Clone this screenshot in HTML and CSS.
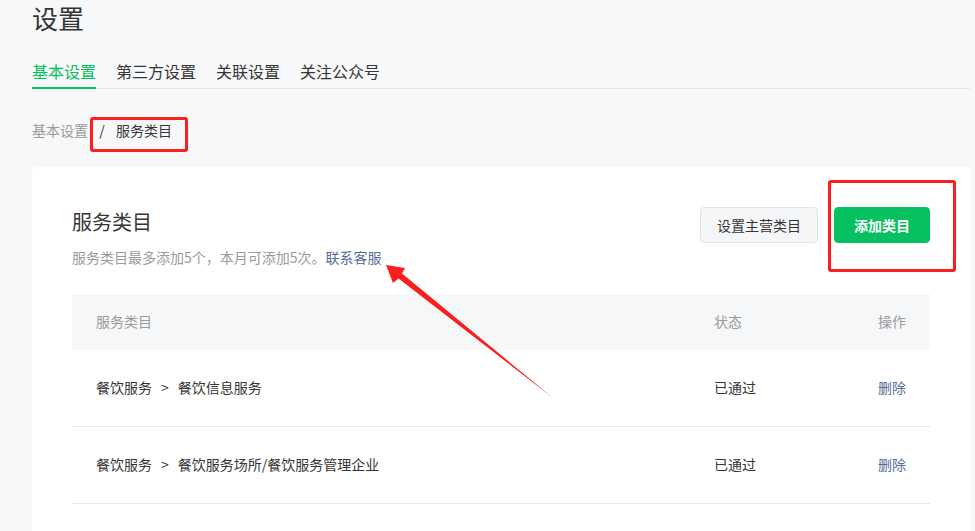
FILE: index.html
```html
<!DOCTYPE html>
<html lang="zh-CN">
<head>
<meta charset="utf-8">
<title>设置</title>
<link rel="stylesheet" href="styles.css">
</head>
<body>
<div class="page">
  <h1 class="page-title">设置</h1>
  <nav class="tabs">
    <a class="tab active">基本设置</a>
    <a class="tab">第三方设置</a>
    <a class="tab">关联设置</a>
    <a class="tab">关注公众号</a>
  </nav>
  <div class="crumbs">
    <span class="crumb-link">基本设置</span>
    <span class="crumb-sep">/</span>
    <span class="crumb-cur">服务类目</span>
  </div>
  <section class="card">
    <div class="card-head">
      <div class="head-text">
        <h2 class="card-title">服务类目</h2>
        <p class="card-desc">服务类目最多添加5个，本月可添加5次。<a class="link">联系客服</a></p>
      </div>
      <div class="head-actions">
        <button class="btn btn-default">设置主营类目</button>
        <button class="btn btn-primary">添加类目</button>
      </div>
    </div>
    <div class="table">
      <div class="tr th">
        <div class="c1">服务类目</div>
        <div class="c2">状态</div>
        <div class="c3">操作</div>
      </div>
      <div class="tr">
        <div class="c1">餐饮服务<span class="gt">&gt;</span>餐饮信息服务</div>
        <div class="c2">已通过</div>
        <div class="c3"><a class="link">删除</a></div>
      </div>
      <div class="tr">
        <div class="c1">餐饮服务<span class="gt">&gt;</span>餐饮服务场所/餐饮服务管理企业</div>
        <div class="c2">已通过</div>
        <div class="c3"><a class="link">删除</a></div>
      </div>
    </div>
  </section>
</div>
<div class="mark mark-crumb"></div>
<div class="mark mark-btn"></div>
<svg class="arrow" width="975" height="531" viewBox="0 0 975 531">
  <polygon points="386,265 393,283 398.5,278.5 553,398 402,273.5 405,268" fill="#fa1e1e"/>
</svg>
</body>
</html>
```

FILE: styles.css
```css
html, body {
  margin: 0;
  padding: 0;
  background: #f7f8fa;
  font-family: "Noto Sans CJK SC", "Noto Sans", sans-serif;
  color: #353535;
}
.page {
  padding: 0 5px 0 32px;
}
.page-title {
  margin: 0;
  font-size: 26px;
  line-height: 36px;
  font-weight: 400;
  color: #353535;
}
.tabs {
  margin-top: 23px;
  display: flex;
  gap: 20px;
  border-bottom: 1px solid #e4e5e7;
}
.tab {
  font-size: 16px;
  line-height: 24px;
  padding-bottom: 4px;
  border-bottom: 2px solid transparent;
  margin-bottom: -1px;
  color: #353535;
}
.tab.active {
  color: #07c160;
  border-bottom-color: #07c160;
}
.crumbs {
  margin-top: 31px;
  font-size: 14px;
  line-height: 20px;
  display: flex;
}
.crumb-link { color: #9a9a9a; }
.crumb-sep { color: #353535; width: 28px; text-align: center; }
.crumb-cur { color: #353535; }
.card {
  margin-top: 27px;
  background: #fff;
  border-radius: 4px;
  padding: 40px 40px 40px;
}
.card-head {
  display: flex;
  justify-content: space-between;
  align-items: flex-start;
}
.card-title {
  margin: 1px 0 0;
  font-size: 20px;
  line-height: 28px;
  font-weight: 400;
  color: #353535;
}
.card-desc {
  margin: 11px 0 0;
  font-size: 14px;
  line-height: 20px;
  color: #9a9a9a;
}
.link {
  color: #576b95;
}
.head-actions {
  display: flex;
  gap: 16px;
}
.btn {
  height: 36px;
  font-family: inherit;
  font-size: 14px;
  border-radius: 4px;
  padding: 0;
}
.btn-default {
  width: 118px;
  background: #f5f6f7;
  border: 1px solid #e2e4e8;
  color: #353535;
}
.btn-primary {
  width: 96px;
  background: #07c160;
  border: 1px solid #07c160;
  color: #fff;
  font-weight: 700;
}
.table {
  margin-top: 27px;
  font-size: 14px;
}
.tr {
  display: grid;
  grid-template-columns: 1fr 136px 80px;
  align-items: center;
  height: 76px;
  border-bottom: 1px solid #e7e7e7;
  color: #353535;
  line-height: 18px;
}
.tr > div { padding-bottom: 2px; }
.tr.th {
  height: 56px;
  background: #f6f7f9;
  border-bottom: none;
  color: #9a9a9a;
}
.c1 { padding-left: 24px; }
.c3 { text-align: right; padding-right: 24px; }
.gt { margin: 0 9px; }
.mark {
  position: absolute;
  border: 3px solid #fa1e1e;
  border-radius: 3px;
  box-sizing: border-box;
}
.mark-crumb { left: 90px; top: 117px; width: 98px; height: 35px; }
.mark-btn { left: 828px; top: 180px; width: 128px; height: 92px; }
.arrow {
  position: absolute;
  left: 0;
  top: 0;
  pointer-events: none;
}
```
